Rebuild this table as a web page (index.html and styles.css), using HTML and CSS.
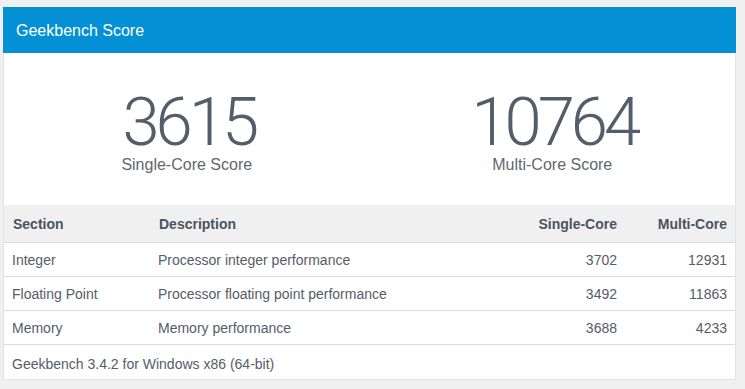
FILE: index.html
```html
<!DOCTYPE html>
<html>
<head>
<meta charset="utf-8">
<link rel="stylesheet" href="styles.css">
</head>
<body>
<div class="card">
  <div class="card-header">Geekbench Score</div>
  <div class="scores">
    <div class="score">
      <div class="score-value">3615</div>
      <div class="score-label">Single-Core Score</div>
    </div>
    <div class="score">
      <div class="score-value">10764</div>
      <div class="score-label">Multi-Core Score</div>
    </div>
  </div>
  <table class="results">
    <colgroup>
      <col class="c-section">
      <col class="c-desc">
      <col class="c-single">
      <col class="c-multi">
    </colgroup>
    <thead>
      <tr>
        <th>Section</th>
        <th>Description</th>
        <th class="num">Single-Core</th>
        <th class="num">Multi-Core</th>
      </tr>
    </thead>
    <tbody>
      <tr>
        <td>Integer</td>
        <td>Processor integer performance</td>
        <td class="num">3702</td>
        <td class="num">12931</td>
      </tr>
      <tr>
        <td>Floating Point</td>
        <td>Processor floating point performance</td>
        <td class="num">3492</td>
        <td class="num">11863</td>
      </tr>
      <tr>
        <td>Memory</td>
        <td>Memory performance</td>
        <td class="num">3688</td>
        <td class="num">4233</td>
      </tr>
    </tbody>
  </table>
  <div class="card-footer">Geekbench 3.4.2 for Windows x86 (64-bit)</div>
</div>
</body>
</html>
```
FILE: styles.css
```css
html, body {
  background: #f0f0f0;
}
body {
  margin: 7px 0 0 3px;
  font-family: "Liberation Sans", Arial, sans-serif;
  color: #555d68;
}
.card {
  width: 731px;
  background: #fff;
  border: 1px solid #e3e3e3;
  border-top: none;
}
.card-header {
  background: #0390d4;
  color: #fff;
  height: 46px;
  display: flex;
  align-items: center;
  font-size: 16px;
  margin: 0 -1px 0 -1px;
  padding-left: 13px;
  padding-top: 1px;
  box-sizing: border-box;
}
.scores {
  display: grid;
  grid-template-columns: 1fr 1fr;
  height: 152px;
}
.score {
  display: flex;
  flex-direction: column;
  align-items: center;
  padding-top: 35px;
}
.score-value {
  font-family: Roboto, "Liberation Sans", sans-serif;
  font-weight: 300;
  font-size: 67px;
  line-height: 60px;
  height: 60px;
  padding-top: 4px;
  letter-spacing: -4px;
  color: #545e6a;
  margin-right: -4px;
}
.score-label {
  font-size: 16px;
  line-height: 20px;
  margin-top: 3px;
  color: #5f6770;
}
.results {
  width: 100%;
  border-collapse: collapse;
  table-layout: fixed;
  font-size: 14px;
}
.c-section { width: 146px; }
.c-single { width: 120px; }
.c-multi { width: 110px; }
.results th {
  background: #f0f0f0;
  font-weight: bold;
  color: #4c545e;
  text-align: left;
  height: 37px;
  padding: 0 8px 0 9px;
  border-bottom: 1px solid #dcdcdc;
}
.results td {
  height: 33px;
  padding: 0 8px;
  border-bottom: 1px solid #dcdcdc;
}
.results .num {
  text-align: right;
  padding-right: 8px;
}
.card-footer {
  height: 34px;
  display: flex;
  align-items: center;
  padding-left: 8px;
  padding-top: 4px;
  box-sizing: border-box;
  font-size: 14px;
}
```
